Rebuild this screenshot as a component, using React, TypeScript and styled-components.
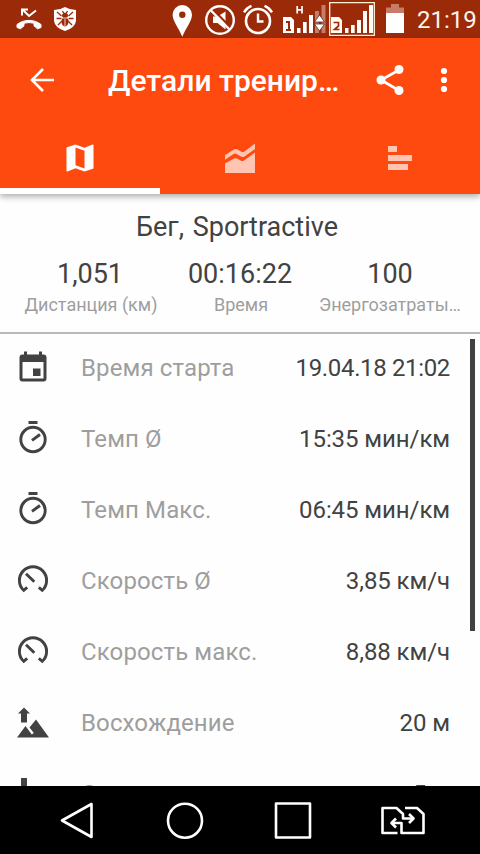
import React from "react";
import styled, { createGlobalStyle } from "styled-components";

const ORANGE = "#ff4a0f";
const DARK = "#424242";
const GREY = "#9e9e9e";

const summary = [
  { value: "1,051", label: "Дистанция (км)" },
  { value: "00:16:22", label: "Время" },
  { value: "100", label: "Энергозатраты (ккал)" },
];

const details = [
  { icon: "calendar", label: "Время старта", value: "19.04.18 21:02", tight: true },
  { icon: "timer", label: "Темп Ø", value: "15:35 мин/км" },
  { icon: "timer", label: "Темп Макс.", value: "06:45 мин/км" },
  { icon: "speed", label: "Скорость Ø", value: "3,85 км/ч" },
  { icon: "speed", label: "Скорость макс.", value: "8,88 км/ч" },
  { icon: "ascent", label: "Восхождение", value: "20 м" },
  { icon: "descent", label: "Спуск", value: "5 м" },
];

function DetailIcon({ name }: { name: string }) {
  // every row icon is drawn in a 36px box
  switch (name) {
    case "calendar":
      return (
        <RowIcon viewBox="0 0 36 36">
          <path
            fillRule="evenodd"
            d="M9 1.500h3v3h12v-3h3v3h1.500a3 3 0 0 1 3 3v21a3 3 0 0 1-3 3h-21a3 3 0 0 1-3-3v-21a3 3 0 0 1 3-3H9zM7.500 12v16.500h21V12zM18 18.500h7.500v7.500H18z"
          />
        </RowIcon>
      );
    case "timer":
      return (
        <RowIcon viewBox="0 0 36 36">
          <path d="M13.500 0h9v3h-9z" />
          <circle cx="18" cy="18.500" r="12.200" fill="none" stroke={DARK} strokeWidth="2.900" />
          <path d="M17 19.300l8-5.800" fill="none" stroke={DARK} strokeWidth="2.900" />
        </RowIcon>
      );
    case "speed":
      return (
        <RowIcon viewBox="0 0 36 36">
          <path
            d="M12.200 24.300L8.700 27.300A13.600 13.600 0 1 1 27.300 27.300L23.800 24.300"
            fill="none"
            stroke={DARK}
            strokeWidth="2.900"
          />
          <path d="M11 10.800l8.300 8" fill="none" stroke={DARK} strokeWidth="2.900" />
        </RowIcon>
      );
    case "ascent":
      return (
        <RowIcon viewBox="0 0 36 36">
          <path d="M9 2.500l6 6h-3v9H6v-9H3z" />
          <path d="M2 32.500l8.500-11.500 6.300 8.500 2-1.500-4.300-5.500 6.500-8L34 32.500z" />
        </RowIcon>
      );
    default:
      return (
        <RowIcon viewBox="0 0 36 36">
          <path d="M6 2h6v9h3l-6 6-6-6h3z" />
          <path d="M2 32.500l8.500-11.500 6.300 8.500 2-1.500-4.300-5.500 6.500-8L34 32.500z" />
        </RowIcon>
      );
  }
}

function StatusBar() {
  return (
    <StatusContainer>
      <StatusIcon width={28} $left={15} viewBox="15 0 28 38">
        <path
          d="M17 27.500v-3c7-5.500 17-5.500 24 0v3l-3.500 1.300-3.500-3v-2.600q-5-1.300-10 0v2.600l-3.500 3z"
          fill="#fff"
          stroke="#fff"
        />
        <path d="M22 9l7 7 7-5.500M22 15.500V9.500h6" fill="none" stroke="#fff" strokeWidth="2" />
      </StatusIcon>
      <StatusIcon width={24} $left={10} viewBox="53 0 24 38">
        <path d="M65 7q5 3 11 3v11q-1 7-11 10-10-3-11-10V10q6 0 11-3z" fill="#fff" />
        <path
          d="M62.500 11l1.500 2.500h2l1.500-2.500M57 12l4.500 4M56.500 18.500h5M58 25l4-4M73 12l-4.500 4M73.500 18.500h-5M72 25l-4-4"
          fill="none"
          stroke="#9b2a09"
          strokeWidth="1.300"
        />
        <ellipse cx="65" cy="15.500" rx="3" ry="2.200" fill="#9b2a09" />
        <ellipse cx="65" cy="21.500" rx="3.500" ry="5" fill="#9b2a09" />
        <path d="M61.500 18h7M65 19v7" stroke="#fff" strokeWidth=".8" />
      </StatusIcon>
      <StatusIcon width={22} $left={94} viewBox="171 0 22 38">
        <path
          fillRule="evenodd"
          d="M182.300 5a9.700 9.700 0 0 1 9.700 9.800c0 6-6 13-9.700 22-3.700-9-9.700-16-9.700-22a9.700 9.700 0 0 1 9.700-9.800zm0 6.500a3.200 3.200 0 1 0 0 6.400 3.200 3.200 0 0 0 0-6.400z"
          fill="#fff"
        />
      </StatusIcon>
      <StatusIcon width={32} $left={11} viewBox="204 0 32 38">
        <path d="M213 16.500h4.500l8-5v18l-8-6.500H213z" fill="#fff" />
        <path d="M212 8.500l19.500 20" stroke="#9b2a09" strokeWidth="2.400" />
        <circle cx="220" cy="20" r="13.800" fill="none" stroke="#fff" strokeWidth="2.400" />
        <path d="M210.500 10l19.500 20" stroke="#fff" strokeWidth="2.400" />
      </StatusIcon>
      <StatusIcon width={32} $left={6} viewBox="242 0 32 38">
        <circle cx="258" cy="21" r="12" fill="none" stroke="#fff" strokeWidth="2.600" />
        <path
          d="M258 13.500V21.500h5.500M244 12.300q2.500-4.500 7.500-6.500M272 12.300q-2.500-4.500-7.500-6.500"
          fill="none"
          stroke="#fff"
          strokeWidth="2.400"
        />
      </StatusIcon>
      <StatusIcon width={44} $left={8} viewBox="282 0 44 38">
        <path d="M315 11h4v22h-4zM321.500 5h4v28h-4z" fill="#c87b66" />
        <path d="M283 17h8l3 3v13h-11zM297 28h3.500v5H297zM303 22h3.700v11H303zM309 15h4v18h-4z" fill="#fff" />
        <path d="M286 22h3v8M286 30h5" fill="none" stroke="#9b2a09" strokeWidth="2" />
        <path d="M297.200 6v7.500M302 6v7.500M297 9.800h5" stroke="#fff" strokeWidth="1.700" />
        <path d="M319.500 15l5 7h-10zM319.500 31l5-7h-10z" fill="#fff" stroke="#54322a" strokeWidth=".8" />
      </StatusIcon>
      <StatusIcon width={46} $left={3} viewBox="329 0 46 38">
        <path d="M329.700 2.700h44.600v32.600h-44.600z" fill="none" stroke="#fff3d8" strokeWidth="1.300" />
        <path
          d="M331 17h8l3 3v13h-11zM345 28h3.500v5H345zM351 25h3.700v8H351zM357 20h4v13h-4zM363 11h4v22h-4zM369 5h4v28h-4z"
          fill="#fffdf5"
        />
        <path d="M333.500 22.500h5v3.500l-4 3.500h5" fill="none" stroke="#9b2a09" strokeWidth="1.700" />
      </StatusIcon>
      <StatusIcon width={20} $left={10} viewBox="385 0 20 38">
        <path d="M391 4h8v3.500h5V13h-18V7.500h5z" fill="#c87b66" />
        <path d="M386 13h18v20h-18z" fill="#fff" />
      </StatusIcon>
      <Clock>21:19</Clock>
    </StatusContainer>
  );
}

function App() {
  return (
    <Screen>
      <GlobalStyle />
      <StatusBar />
      <Header>
        <Toolbar>
          <ToolbarIcon width={24} viewBox="30 64 24 32">
            <path d="M54 80H32M43 69L32 80l11 11" fill="none" stroke="#fff" strokeWidth="2.600" />
          </ToolbarIcon>
          <Title>Детали тренировки</Title>
          <ToolbarIcon width={30} viewBox="375 64 30 32">
            <path d="M399 70l-18 10 18 10.500" fill="none" stroke="#fff" strokeWidth="2.700" />
            <circle cx="399" cy="69.500" r="4.500" fill="#fff" />
            <circle cx="381" cy="80" r="4.500" fill="#fff" />
            <circle cx="399" cy="90.500" r="4.500" fill="#fff" />
          </ToolbarIcon>
          <MenuIcon width={8} viewBox="440 64 8 32">
            <circle cx="444" cy="71" r="3.100" fill="#fff" />
            <circle cx="444" cy="80" r="3.100" fill="#fff" />
            <circle cx="444" cy="89" r="3.100" fill="#fff" />
          </MenuIcon>
        </Toolbar>
        <Tabs>
          <Tab $active>
            <TabIcon viewBox="0 0 24 24">
              <path d="M20.500 3l-.16.03L15 5.100 9 3 3.360 4.900c-.21.07-.36.25-.36.480V20.500c0 .28.22.5.5.5l.16-.03L9 18.900l6 2.100 5.640-1.900c.21-.07.36-.25.36-.48V3.500c0-.28-.22-.5-.5-.5zM15 19l-6-2.110V5l6 2.110V19z" />
            </TabIcon>
          </Tab>
          <Tab>
            <TabIcon viewBox="222 140 36 36">
              <path d="M225 155l9-5.500q1.500-1 3.500 0l4 2.200q1.500.7 3-.3l10.500-8v5.500l-10.500 7.500q-1.500 1-3 .3l-5.500-3q-1-.6-2 0l-9 6z" />
              <path d="M225 163.500l9-5q1.500-.8 3.500.2l3.500 2q1.500.8 3-.3l11-8V173h-30z" />
            </TabIcon>
          </Tab>
          <Tab>
            <TabIcon viewBox="382 140 36 36">
              <path d="M388 146h9v6h-9zM388 155h24v6h-24zM388 164h20v6h-20z" />
            </TabIcon>
          </Tab>
        </Tabs>
      </Header>

      <Summary>
        <Activity>Бег, Sportractive</Activity>
        <Stats>
          {summary.map((s) => (
            <Stat key={s.label}>
              <StatValue>{s.value}</StatValue>
              <StatLabel>{s.label}</StatLabel>
            </Stat>
          ))}
        </Stats>
      </Summary>

      <Details>
        <List>
          {details.map((d) => (
            <Row key={d.label}>
              <DetailIcon name={d.icon} />
              <RowLabel>{d.label}</RowLabel>
              <RowValue $tight={d.tight}>{d.value}</RowValue>
            </Row>
          ))}
        </List>
        <ScrollThumb />
      </Details>

      <NavBar>
        <NavIcon viewBox="0 0 48 48">
          <path d="M39.500 7v33L10 23.500z" />
        </NavIcon>
        <NavIcon viewBox="0 0 48 48">
          <circle cx="24" cy="23.700" r="17" />
        </NavIcon>
        <NavIcon viewBox="0 0 48 48">
          <path d="M7 6.500h34v34H7z" />
        </NavIcon>
        <NavIcon viewBox="0 0 48 48">
          <path d="M19.500 36H4.500V11h14l6.500 6v4.500h9M27 11h12l6.500 6v19H23.500V26H14" />
          <path d="M31 17l4.500 4.500-4.500 4.500M18 21.500l-4.500 4.500 4.500 4.500" />
        </NavIcon>
      </NavBar>
    </Screen>
  );
}

const GlobalStyle = createGlobalStyle`
  body {
    margin: 0;
    font-family: Roboto, "Liberation Sans", sans-serif;
    color: ${DARK};
  }
`;

const Screen = styled.div`
  display: flex;
  flex-direction: column;
  width: 480px;
  height: 854px;
  overflow: hidden;
  background: #fefefe;
`;

const StatusContainer = styled.div`
  display: flex;
  align-items: center;
  height: 38px;
  flex-shrink: 0;
  background: #9b2a09;
`;

const StatusIcon = styled.svg<{ $left: number }>`
  height: 38px;
  flex-shrink: 0;
  margin-left: ${(props) => props.$left}px;
`;

const Clock = styled.span`
  margin-left: 12px;
  color: #fff3ee;
  font-size: 24px;
  line-height: 38px;
  padding-top: 1px;
`;

const Header = styled.header`
  position: relative;
  flex-shrink: 0;
  background: ${ORANGE};
  box-shadow: 0 3px 6px rgba(0, 0, 0, 0.3);
`;

const Toolbar = styled.div`
  display: flex;
  align-items: center;
  height: 84px;
  padding-left: 30px;
`;

const ToolbarIcon = styled.svg`
  height: 32px;
  flex-shrink: 0;
`;

const MenuIcon = styled(ToolbarIcon)`
  margin-left: 35px;
`;

const Title = styled.h1`
  margin: 2px 32px 0 54px;
  width: 235px;
  color: #fff;
  font-size: 30px;
  font-weight: 500;
  line-height: 40px;
  white-space: nowrap;
  overflow: hidden;
  text-overflow: ellipsis;
`;

const Tabs = styled.nav`
  display: grid;
  grid-template-columns: repeat(3, 1fr);
  height: 72px;
`;

const Tab = styled.div<{ $active?: boolean }>`
  display: flex;
  align-items: center;
  justify-content: center;
  color: ${(props) => (props.$active ? "#fff" : "#ffc4b2")};
  box-shadow: ${(props) => (props.$active ? "inset 0 -6px #fff" : "none")};
`;

const TabIcon = styled.svg`
  width: 36px;
  height: 36px;
  fill: currentColor;
`;

const Summary = styled.section`
  height: 140px;
  flex-shrink: 0;
  box-sizing: border-box;
  padding-top: 15px;
  border-bottom: 2px solid #b9b9b9;
`;

const Activity = styled.div`
  font-size: 27px;
  line-height: 36px;
  text-align: center;
  padding-right: 6px;
  word-spacing: 2px;
`;

const Stats = styled.div`
  display: grid;
  grid-template-columns: repeat(3, 150px);
  justify-content: center;
  margin-top: 11px;
`;

const Stat = styled.div`
  min-width: 0;
  text-align: center;
`;

const StatValue = styled.div`
  font-size: 27px;
  line-height: 36px;
`;

const StatLabel = styled.div`
  margin: 0 2px 0 4px;
  color: ${GREY};
  font-size: 18px;
  line-height: 26px;
  white-space: nowrap;
  overflow: hidden;
  text-overflow: ellipsis;
`;

const Details = styled.section`
  position: relative;
  flex: 1;
  min-height: 0;
  overflow: hidden;
`;

const List = styled.div`
  margin-top: -2px;
`;

const Row = styled.div`
  display: flex;
  align-items: center;
  height: 71px;
  padding: 0 30px 0 15px;
  font-size: 24px;
`;

const RowIcon = styled.svg`
  width: 36px;
  height: 36px;
  margin-right: 30px;
  fill: ${DARK};
`;

const RowLabel = styled.span`
  flex: 1;
  color: ${GREY};
  letter-spacing: 0.12px;
`;

const RowValue = styled.span<{ $tight?: boolean }>`
  color: ${DARK};
  letter-spacing: ${(props) => (props.$tight ? "-0.35px" : "-0.08px")};
`;

const ScrollThumb = styled.div`
  position: absolute;
  top: 5px;
  right: 5px;
  width: 5px;
  height: 292px;
  background: #3f4142;
`;

const NavBar = styled.nav`
  display: flex;
  justify-content: space-between;
  height: 68px;
  flex-shrink: 0;
  box-sizing: border-box;
  padding: 11px 54px 9px 52px;
  background: #000;
`;

const NavIcon = styled.svg`
  width: 48px;
  height: 48px;
  fill: none;
  stroke: #fff;
  stroke-width: 2.6;
  stroke-linejoin: round;
`;

export default App;
